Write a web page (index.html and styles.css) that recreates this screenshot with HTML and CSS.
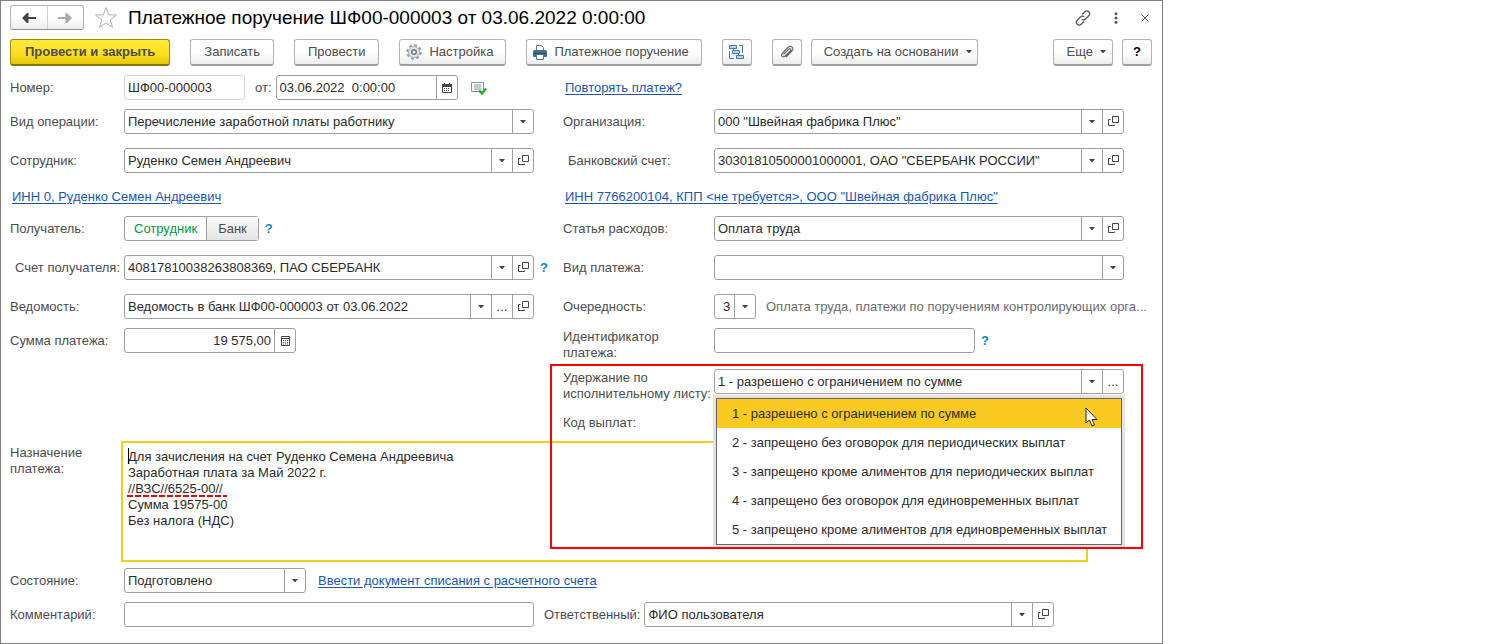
FILE: index.html
```html
<!DOCTYPE html>
<html lang="ru">
<head>
<meta charset="utf-8">
<title>Платежное поручение</title>
<link rel="stylesheet" href="styles.css">
</head>
<body>
<svg class="sprite" aria-hidden="true">
  <symbol id="i-open" viewBox="0 0 11 11"><path d="M4.5 .5h6v6h-6zM2.5 3.5h-2v6h6v-1" fill="none" stroke="#444"/></symbol>
  <symbol id="i-caret" viewBox="0 0 6 4"><path d="M0 0h6L3.500 3h-1z" fill="#444"/></symbol>
</svg>
<main class="window">
  <header class="head">
    <div class="nav">
      <button type="button" aria-label="Назад"><svg width="14" height="10" viewBox="0 0 14 10"><path d="M0 5l5-5h1.500v4H14v2H6.500v4H5z" fill="#444"/></svg></button>
      <button type="button" aria-label="Вперед"><svg width="14" height="10" viewBox="0 0 14 10"><path d="M14 5L9 0H7.500v4H0v2h7.500v4H9z" fill="#aaa"/></svg></button>
    </div>
    <button type="button" class="plain star" aria-label="В избранное"><svg width="24" height="23" viewBox="0 0 24 23"><path d="M12 1.500l2.700 7.300 7.800.200-6.200 4.800 2.200 7.600L12 17l-6.500 4.400 2.200-7.600L1.500 9l7.800-.2z" fill="#fff" stroke="#a9b2bd"/></svg></button>
    <h1>Платежное поручение ШФ00-000003 от 03.06.2022 0:00:00</h1>
    <div class="win-tools">
      <button type="button" class="plain" aria-label="Получить ссылку"><svg width="16" height="16" viewBox="0 0 16 16" fill="none" stroke="#555" stroke-width="1.300"><path d="M7 4.500l2.800-2.800a2.700 2.700 0 0 1 4 0a2.700 2.700 0 0 1 0 4L10.500 9a2.600 2.600 0 0 1-3.700.2M9 11.500l-2.800 2.800a2.700 2.700 0 0 1-4 0a2.700 2.700 0 0 1 0-4L5.500 7a2.600 2.600 0 0 1 3.700-.2"/></svg></button>
      <button type="button" class="plain" aria-label="Меню"><svg width="4" height="12" viewBox="0 0 4 12" fill="#555"><circle cx="2" cy="1.700" r="1.500"/><circle cx="2" cy="6" r="1.500"/><circle cx="2" cy="10.300" r="1.500"/></svg></button>
      <button type="button" class="plain" aria-label="Закрыть"><svg width="8" height="8" viewBox="0 0 8 8"><path d="M.5.5l7 7M7.500.5l-7 7" stroke="#555"/></svg></button>
    </div>
  </header>

  <div class="toolbar">
    <button type="button" class="btn primary">Провести и закрыть</button>
    <button type="button" class="btn">Записать</button>
    <button type="button" class="btn">Провести</button>
    <button type="button" class="btn with-icon"><svg width="16" height="16" viewBox="0 0 16 16"><circle cx="8" cy="8" r="6.700" fill="none" stroke="#939ba4" stroke-width="2" stroke-dasharray="2.900 2.360"/><circle cx="8" cy="8" r="5.500" fill="#e6e9ec" stroke="#a3abb3"/><circle cx="8" cy="8" r="2.300" fill="#fff" stroke="#6b7682" stroke-width="1.500"/></svg>Настройка</button>
    <button type="button" class="btn with-icon"><svg width="14" height="15" viewBox="0 0 14 15"><path d="M3.500 6V.5h5l2 2V6" fill="#fff" stroke="#55789a"/><rect y="5" width="14" height="7" rx="1.500" fill="#3f6e99"/><path d="M1 8.500h12" stroke="#24496d"/><path d="M3.500 9.500h7v5h-7z" fill="#fff" stroke="#55789a"/></svg>Платежное поручение</button>
    <button type="button" class="btn square" aria-label="Структура подчиненности"><svg width="15" height="15" viewBox="0 0 15 15" fill="#b9d3e6" stroke="#3f7ca8"><path d="M10 .5h3.500V8M.5 6v7.500H5M4.500 3.500V6M9.500 8v3" fill="none"/><path d="M.5.5h7v3h-7zM3.500 5.500h7v3h-7zM7.500 10.500h7v3h-7z"/></svg></button>
    <button type="button" class="btn square" aria-label="Прикрепленные файлы"><svg width="14" height="14" viewBox="0 0 14 14"><path d="M3.500 9.500l5.300-5.300c1.400-1.400 3 .2 1.700 1.500L5.300 11c-2.400 2.300-5.200-.4-3-2.700L8 2.500c3-2.900 6.700.6 3.900 3.500L6 12" fill="none" stroke="#666" stroke-width="1.200"/></svg></button>
    <button type="button" class="btn tight">Создать на основании<svg width="6" height="4"><use href="#i-caret"/></svg></button>
    <button type="button" class="btn push">Еще<svg width="6" height="4"><use href="#i-caret"/></svg></button>
    <button type="button" class="btn square help-btn">?</button>
  </div>

  <form class="form">
    <div class="columns">
      <div class="col left">
        <div class="row">
          <label for="num">Номер:</label>
          <div class="field w-num readonly"><input id="num" value="ШФ00-000003" readonly></div>
          <label class="inline" for="date">от:</label>
          <div class="field w-date"><input id="date" value="03.06.2022  0:00:00"><button type="button" aria-label="Календарь"><svg width="10" height="10" viewBox="0 0 10 10"><path d="M.5 1.500h9v8h-9z" fill="#fff" stroke="#444"/><path d="M0 1h10v3H0zM2 0h1v1H2zM7 0h1v1H7z" fill="#444"/><path d="M2 5.500h6M2 7.500h6" stroke="#444" stroke-dasharray="1 1"/></svg></button></div>
          <svg class="posted" width="16" height="14" viewBox="0 0 16 14"><path d="M.5 1.500h12v9H.5z" fill="#fff" stroke="#8294a8"/><path d="M3 4h7M3 6h7M3 8h7" stroke="#8294a8"/><path d="M8 9.500l3 3 4-5" fill="none" stroke="#1fb52f" stroke-width="2.400"/></svg>
        </div>
        <div class="row near">
          <label for="op">Вид операции:</label>
          <div class="field"><select id="op"><option>Перечисление заработной платы работнику</option></select></div>
        </div>
        <div class="row">
          <label for="emp">Сотрудник:</label>
          <div class="field"><select id="emp"><option>Руденко Семен Андреевич</option></select><button type="button" aria-label="Открыть"><svg width="11" height="11"><use href="#i-open"/></svg></button></div>
        </div>
        <div class="row link-row"><a href="#">ИНН 0, Руденко Семен Андреевич</a></div>
        <div class="row near">
          <span class="label" id="rcpt">Получатель:</span>
          <div class="toggle" role="group" aria-labelledby="rcpt"><button type="button" class="on" aria-pressed="true">Сотрудник</button><button type="button" aria-pressed="false">Банк</button></div>
          <button type="button" class="plain hint">?</button>
        </div>
        <div class="row">
          <label class="indent" for="acc">Счет получателя:</label>
          <div class="field"><select id="acc"><option>40817810038263808369, ПАО СБЕРБАНК</option></select><button type="button" aria-label="Открыть"><svg width="11" height="11"><use href="#i-open"/></svg></button></div>
          <button type="button" class="plain hint">?</button>
        </div>
        <div class="row">
          <label for="sheet">Ведомость:</label>
          <div class="field"><select id="sheet"><option>Ведомость в банк ШФ00-000003 от 03.06.2022</option></select><button type="button">...</button><button type="button" aria-label="Открыть"><svg width="11" height="11"><use href="#i-open"/></svg></button></div>
        </div>
        <div class="row near">
          <label for="sum">Сумма платежа:</label>
          <div class="field w-sum"><input id="sum" class="num" value="19 575,00"><button type="button" aria-label="Калькулятор"><svg width="9" height="10" viewBox="0 0 9 10"><path d="M.5.5h8v9h-8zM1 2.500h7" fill="none" stroke="#444"/><path d="M2 4.500h5M2 6.500h5M2 8h5" stroke="#444" stroke-dasharray="1 1"/></svg></button></div>
        </div>
      </div>

      <div class="col right">
        <div class="row link-row first"><a href="#">Повторять платеж?</a></div>
        <div class="row near">
          <label for="org">Организация:</label>
          <div class="field"><select id="org"><option>000 "Швейная фабрика Плюс"</option></select><button type="button" aria-label="Открыть"><svg width="11" height="11"><use href="#i-open"/></svg></button></div>
        </div>
        <div class="row">
          <label class="indent" for="bank">Банковский счет:</label>
          <div class="field"><select id="bank"><option>30301810500001000001, ОАО "СБЕРБАНК РОССИИ"</option></select><button type="button" aria-label="Открыть"><svg width="11" height="11"><use href="#i-open"/></svg></button></div>
        </div>
        <div class="row link-row"><a href="#">ИНН 7766200104, КПП &lt;не требуется&gt;, ООО "Швейная фабрика Плюс"</a></div>
        <div class="row near">
          <label for="cost">Статья расходов:</label>
          <div class="field"><select id="cost"><option>Оплата труда</option></select><button type="button" aria-label="Открыть"><svg width="11" height="11"><use href="#i-open"/></svg></button></div>
        </div>
        <div class="row">
          <label for="kind">Вид платежа:</label>
          <div class="field"><select id="kind"><option></option></select></div>
        </div>
        <div class="row">
          <label for="prio">Очередность:</label>
          <div class="field w-prio"><select id="prio"><option>3</option></select></div>
          <span class="note">Оплата труда, платежи по поручениям контролирующих орга...</span>
        </div>
        <div class="row near tall">
          <label for="ident">Идентификатор<br>платежа:</label>
          <div class="field w-ident"><input id="ident"></div>
          <button type="button" class="plain hint">?</button>
        </div>
        <div class="deduction near">
          <div class="row tall">
            <label for="ded">Удержание по<br>исполнительному листу:</label>
            <div class="field"><select id="ded"><option>1 - разрешено с ограничением по сумме</option></select><button type="button">...</button>
              <ul class="menu" role="listbox">
                <li role="option" aria-selected="true">1 - разрешено с ограничением по сумме</li>
                <li role="option">2 - запрещено без оговорок для периодических выплат</li>
                <li role="option">3 - запрещено кроме алиментов для периодических выплат</li>
                <li role="option">4 - запрещено без оговорок для единовременных выплат</li>
                <li role="option">5 - запрещено кроме алиментов для единовременных выплат</li>
              </ul>
              <svg class="pointer" width="13" height="20" viewBox="0 0 13 20"><path d="M1 1v15l3.500-3 2.500 6 2.500-1-2.500-5.500H12z" fill="#fff" stroke="#222"/></svg>
            </div>
          </div>
          <div class="row near"><span class="label">Код выплат:</span></div>
          <div class="callout"></div>
        </div>
      </div>
    </div>

    <div class="row purpose">
      <label for="purpose">Назначение<br>платежа:</label>
      <div class="memo">
        <textarea id="purpose" rows="7" spellcheck="false">Для зачисления на счет Руденко Семена Андреевича
Заработная плата за Май 2022 г.
//ВЗС//6525-00//
Сумма 19575-00
Без налога (НДС)</textarea>
        <span class="text-caret"></span>
        <span class="mark"></span>
      </div>
    </div>
    <div class="row state">
      <label for="state">Состояние:</label>
      <div class="field w-state"><select id="state"><option>Подготовлено</option></select></div>
      <a href="#">Ввести документ списания с расчетного счета</a>
    </div>
    <div class="row near-flow">
      <label for="comment">Комментарий:</label>
      <div class="field"><input id="comment"></div>
      <label class="inline" for="resp">Ответственный:</label>
      <div class="field"><select id="resp"><option>ФИО пользователя</option></select><button type="button" aria-label="Открыть"><svg width="11" height="11"><use href="#i-open"/></svg></button></div>
    </div>
  </form>
</main>
</body>
</html>
```
FILE: styles.css
```css
* { box-sizing: border-box; }
body {
  margin: 0;
  background: #fff;
  color: #4c4c4c;
  font: 13px/16px "Liberation Sans", Arial, sans-serif;
}
button, input, select, textarea { font: inherit; color: inherit; margin: 0; }
button { padding: 0; cursor: pointer; }
a { color: #1a56b0; text-underline-offset: 2px; white-space: nowrap; }
.sprite { position: absolute; width: 0; height: 0; }

.window {
  max-width: 1163px;
  min-height: 100vh;
  padding: 4px 9px 15px;
  border: 1px solid #808080;
}

/* Title bar */
.head { display: flex; align-items: center; height: 25px; }
.nav {
  display: flex;
  width: 74px;
  height: 25px;
  border: 1px solid #b3b3b3;
  border-bottom-color: #8f8f8f;
  border-radius: 3px;
  background: linear-gradient(#fff 50%, #ececec);
}
.nav button {
  flex: 1;
  display: flex;
  align-items: center;
  justify-content: center;
  border: 0;
  background: none;
}
.nav button + button { border-left: 1px solid #d0d0d0; }
.plain { display: flex; align-items: center; justify-content: center; border: 0; background: none; }
.star { margin: 0 10px; }
h1 { margin: 0; font-size: 19px; line-height: 24px; font-weight: 400; color: #000; white-space: nowrap; }
.win-tools { display: flex; align-items: center; gap: 23px; margin-left: auto; padding-right: 4px; }

/* Command bar */
.toolbar { display: flex; gap: 20px; margin-top: 9px; padding-right: 1px; }
.btn {
  display: flex;
  align-items: center;
  justify-content: center;
  gap: 7px;
  height: 27px;
  padding: 0 13px;
  border: 1px solid #b3b3b3;
  border-bottom: 2px solid #a0a0a0;
  border-radius: 3px;
  background: linear-gradient(#fff 50%, #ececec);
  white-space: nowrap;
}
.primary {
  padding: 0 14px;
  border-color: #a28a00;
  border-bottom-color: #857200;
  background: linear-gradient(#ffea3d, #fde01c 60%, #e6c80f);
  font-weight: 700;
}
.with-icon { padding: 0 12px 0 6px; }
.square { width: 30px; padding: 0; }
.tight { margin-left: -11px; padding: 0 5px 0 12px; }
.push { margin-left: auto; padding: 0 6px 0 13px; }
.help-btn { margin-left: -11px; color: #000; font-weight: 700; }

/* Form grid */
.form { margin-top: 9px; }
.columns { display: grid; grid-template-columns: 543fr 590fr; gap: 10px; }
.col { display: flex; flex-direction: column; gap: 14px; min-width: 0; }
.row { display: flex; align-items: center; min-height: 25px; }
.near { margin-top: -5px; }
.link-row { min-height: 20px; padding-left: 2px; }
.link-row.first { min-height: 25px; }
.tall { align-items: flex-start; height: 32px; }
.tall label { padding-top: 1px; }
label, .label { flex: none; white-space: nowrap; }
.row > label:first-child, .row > .label:first-child { width: 114px; }
.right .row > label:first-child, .right .row > .label:first-child { width: 151px; }
.row > .indent:first-child { padding-left: 5px; }
.row > .inline { margin: 0 4px 0 10px; }

.field {
  position: relative;
  display: flex;
  flex: 0 1 410px;
  min-width: 0;
  height: 25px;
  border: 1px solid #a0a0a0;
  border-radius: 3px;
  background: #fff;
  color: #2b2b2b;
}
.field input, .field select {
  flex: 1;
  width: 100%;
  min-width: 0;
  padding: 0 3px;
  border: 0;
  outline: 0;
  background-color: transparent;
  white-space: pre;
}
.field select {
  appearance: none;
  padding-right: 23px;
  background: url("data:image/svg+xml,%3Csvg xmlns='http://www.w3.org/2000/svg' width='21' height='23'%3E%3Cpath d='M.5 0v23' stroke='%23a0a0a0'/%3E%3Cpath d='M8 10h6l-2.500 3h-1z' fill='%23444'/%3E%3C/svg%3E") right center no-repeat;
}
.field button {
  flex: none;
  display: flex;
  align-items: center;
  justify-content: center;
  width: 21px;
  border: 0;
  border-left: 1px solid #a0a0a0;
  background: none;
}
.field .num { text-align: right; }
.readonly { border-color: #d4d4d4; }
.w-num { flex-basis: 121px; }
.w-date { flex-basis: 182px; }
.w-sum { flex-basis: 172px; }
.w-state { flex-basis: 182px; }
.w-ident { flex-basis: 261px; }
.w-prio { flex: 0 0 42px; }
.w-prio select { padding-left: 8px; padding-right: 21px; }
.posted { margin-left: 13px; }
.note { margin-left: 10px; min-width: 0; color: #6b6b6b; white-space: nowrap; }
.hint { width: 8px; height: 25px; margin-left: 6px; color: #1583cc; font-weight: 700; }

.toggle {
  display: flex;
  height: 25px;
  border: 1px solid #a0a0a0;
  border-radius: 3px;
  background: #fff;
}
.toggle button {
  padding: 0 11px;
  border: 0;
  border-left: 1px solid #a0a0a0;
  background: linear-gradient(#fafafa, #e4e4e4);
}
.toggle .on { padding: 0 9px; border: 0; background: none; color: #009646; }

/* Open list of deduction kinds */
.deduction { position: relative; z-index: 1; }
.deduction .row + .row { margin-top: 9px; }
.menu {
  position: absolute;
  top: 28px;
  left: 1px;
  right: 1px;
  margin: 0;
  padding: 0;
  border: 1px solid #666;
  background: #fff;
  box-shadow: 0 0 0 3px #e2e2e2;
  list-style: none;
  color: #2b2b2b;
}
.menu li { padding: 7px 15px 6px; white-space: nowrap; }
.menu [aria-selected="true"] { background: #f9cb20; }
.pointer { position: absolute; right: 25px; top: 37px; }
.callout {
  position: absolute;
  top: -5px;
  left: -13px;
  right: 10px;
  height: 185px;
  border: 2px solid #f00;
  pointer-events: none;
}

/* Payment purpose */
.purpose { align-items: flex-start; margin-top: 6px; }
.purpose label { padding-top: 4px; }
.memo { position: relative; flex: 0 1 967px; margin-left: -3px; }
.purpose textarea {
  display: block;
  width: 100%;
  height: 121px;
  padding: 6px 5px;
  border: 2px solid #f9cb20;
  outline: 0;
  resize: none;
  color: #2b2b2b;
  line-height: 16px;
}
.text-caret { position: absolute; left: 7px; top: 7px; width: 1px; height: 16px; background: #000; }
.mark {
  position: absolute;
  left: 6px;
  top: 54px;
  width: 100px;
  height: 2px;
  background: repeating-linear-gradient(90deg, #e00 0 6px, transparent 6px 8px);
}
.state { margin-top: 6px; }
.state a { margin-left: 12px; }
.near-flow { margin-top: 9px; }
```
